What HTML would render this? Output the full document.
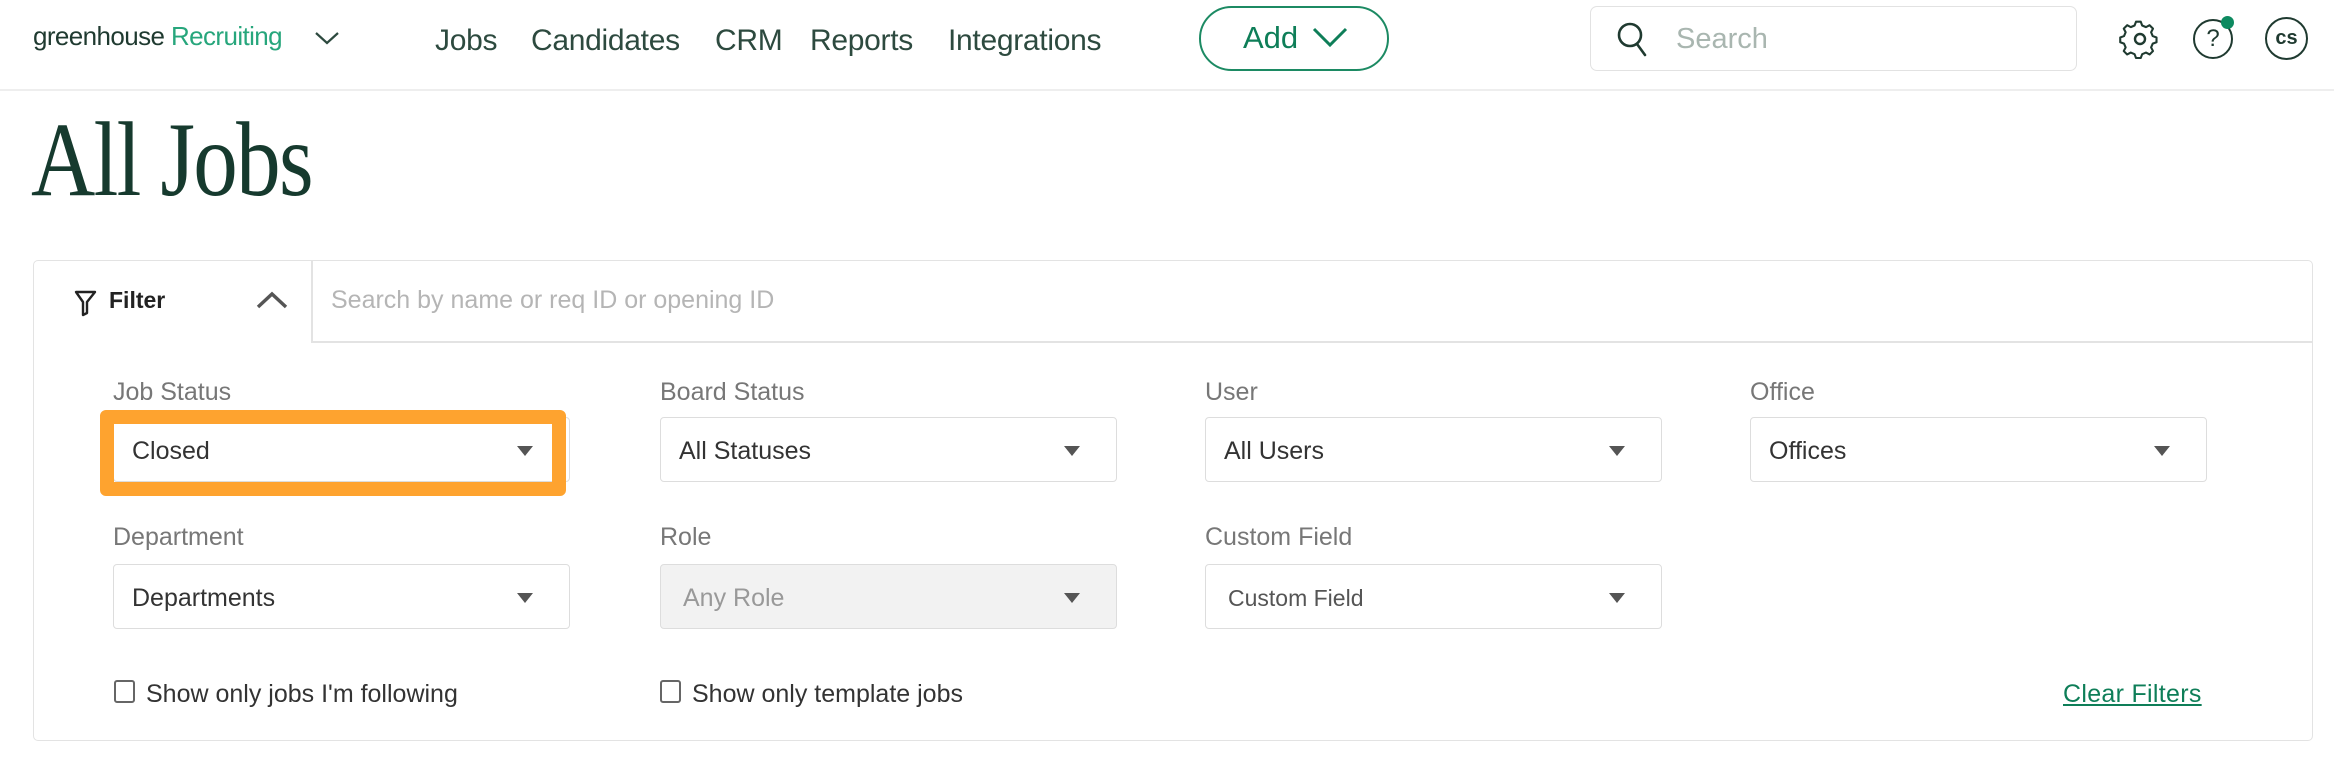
<!DOCTYPE html>
<html><head><meta charset="utf-8"><style>
*{margin:0;padding:0;box-sizing:border-box}
body{width:2334px;height:770px;background:#fff;font-family:"Liberation Sans",sans-serif;position:relative;overflow:hidden}
.a{position:absolute;white-space:nowrap}
.nav{top:24px;font-size:30px;color:#2d4a3f;letter-spacing:-0.3px}
.lbl{font-size:25px;color:#777}
.sel{position:absolute;width:457px;height:65px;border:1.5px solid #ddd;border-radius:4px;background:#fff;font-size:25px;color:#333;padding-left:18px;line-height:66px}
.sel:after{content:"";position:absolute;right:36px;top:28px;border-left:8px solid transparent;border-right:8px solid transparent;border-top:10px solid #555}
.cb{position:absolute;width:21px;height:23px;border:2px solid #666;border-radius:3px}
.ct{font-size:25px;color:#333}
</style></head><body>
<div class="a" style="left:33px;top:21px;font-size:26px;letter-spacing:-0.6px"><span style="color:#1f3a30">greenhouse</span> <span style="color:#27a67c">Recruiting</span></div>
<svg class="a" style="left:314px;top:30px" width="26" height="16"><path d="M2 3 L13 13 L24 3" fill="none" stroke="#2d4a3f" stroke-width="2.2"/></svg>
<div class="a nav" style="left:435px">Jobs</div>
<div class="a nav" style="left:531px">Candidates</div>
<div class="a nav" style="left:715px">CRM</div>
<div class="a nav" style="left:810px">Reports</div>
<div class="a nav" style="left:948px">Integrations</div>
<div class="a" style="left:1199px;top:6px;width:190px;height:65px;border:2px solid #1c8a63;border-radius:33px"></div>
<div class="a" style="left:1243px;top:20px;font-size:31px;color:#0e7e58">Add</div>
<svg class="a" style="left:1312px;top:26px" width="36" height="22"><path d="M2 3 L18 19 L34 3" fill="none" stroke="#0e7e58" stroke-width="3"/></svg>
<div class="a" style="left:1590px;top:6px;width:487px;height:65px;border:1.5px solid #e2e2e2;border-radius:7px"></div>
<svg class="a" style="left:1612px;top:19px" width="40" height="40"><circle cx="18" cy="16" r="11" fill="none" stroke="#1f3a30" stroke-width="2.6"/><path d="M25 25 L33 36" stroke="#1f3a30" stroke-width="2.6" stroke-linecap="round"/></svg>
<div class="a" style="left:1676px;top:23px;font-size:29px;color:#a9b6b0">Search</div>
<svg class="a" style="left:2119px;top:18px" width="44" height="44"><path d="M22 6 l3 0 l1.5 4 l4 1.7 l3.8-2 l3.6 3.6 l-2 3.8 l1.7 4 l4 1.5 v5 l-4 1.5 l-1.7 4 l2 3.8 l-3.6 3.6 l-3.8-2 l-4 1.7 l-1.5 4 h-5 l-1.5-4 l-4-1.7 l-3.8 2 l-3.6-3.6 l2-3.8 l-1.7-4 l-4-1.5 v-5 l4-1.5 l1.7-4 l-2-3.8 l3.6-3.6 l3.8 2 l4-1.7 l1.5-4 z" fill="none" stroke="#1f3a30" stroke-width="2.2" stroke-linejoin="round" transform="translate(-2,-2) scale(0.95)"/><circle cx="21" cy="21" r="5" fill="none" stroke="#1f3a30" stroke-width="2.4"/></svg>
<div class="a" style="left:2193px;top:19px;width:40px;height:40px;border:2.5px solid #1f3a30;border-radius:50%;text-align:center;font-size:24px;line-height:35px;color:#1f3a30">?</div>
<div class="a" style="left:2221px;top:16px;width:13px;height:13px;border-radius:50%;background:#0d8a60"></div>
<div class="a" style="left:2265px;top:17px;width:43px;height:43px;border:2.5px solid #1f3a30;border-radius:50%;text-align:center;font-size:20px;font-weight:bold;line-height:38px;color:#1f3a30">cs</div>
<div class="a" style="left:0;top:89px;width:2334px;height:2px;background:#eeeeee"></div>
<div class="a" style="left:31px;top:99px;font-family:'Liberation Serif',serif;font-size:106px;color:#163a2e;letter-spacing:-2px;transform:scaleX(0.84);transform-origin:left">All Jobs</div>

<div class="a" style="left:33px;top:260px;width:2280px;height:481px;border:1.5px solid #e3e3e3;border-radius:5px"></div>
<div class="a" style="left:311px;top:260px;width:1.5px;height:82px;background:#e3e3e3"></div>
<div class="a" style="left:311px;top:341px;width:2001px;height:1.5px;background:#e3e3e3"></div>
<svg class="a" style="left:73px;top:288px" width="26" height="30"><path d="M3 4 H22 L14 14 V25 L10 27 V14 Z" fill="none" stroke="#222" stroke-width="2.4" stroke-linejoin="round"/></svg>
<div class="a" style="left:109px;top:287px;font-size:23px;font-weight:bold;color:#222">Filter</div>
<svg class="a" style="left:255px;top:289px" width="34" height="22"><path d="M3 18 L17 5 L31 18" fill="none" stroke="#555" stroke-width="3.4"/></svg>
<div class="a" style="left:331px;top:286px;font-size:25px;color:#b5b5b5">Search by name or req ID or opening ID</div>

<div class="a lbl" style="left:113px;top:378px">Job Status</div>
<div class="a lbl" style="left:660px;top:378px">Board Status</div>
<div class="a lbl" style="left:1205px;top:378px">User</div>
<div class="a lbl" style="left:1750px;top:378px">Office</div>
<div class="sel" style="left:113px;top:417px">Closed</div>
<div class="a" style="left:100px;top:410px;width:466px;height:86px;border:14px solid #fea32f;border-radius:6px"></div>
<div class="sel" style="left:660px;top:417px">All Statuses</div>
<div class="sel" style="left:1205px;top:417px">All Users</div>
<div class="sel" style="left:1750px;top:417px">Offices</div>

<div class="a lbl" style="left:113px;top:523px">Department</div>
<div class="a lbl" style="left:660px;top:523px">Role</div>
<div class="a lbl" style="left:1205px;top:523px">Custom Field</div>
<div class="sel" style="left:113px;top:564px">Departments</div>
<div class="sel" style="left:660px;top:564px;background:#f2f2f2;color:#999;padding-left:22px">Any Role</div>
<div class="sel" style="left:1205px;top:564px;color:#555;padding-left:22px;font-size:23px">Custom Field</div>

<div class="cb" style="left:114px;top:680px"></div>
<div class="a ct" style="left:146px;top:680px">Show only jobs I'm following</div>
<div class="cb" style="left:660px;top:680px"></div>
<div class="a ct" style="left:692px;top:680px">Show only template jobs</div>
<div class="a" style="left:2063px;top:680px;font-size:25px;color:#0e7e58;text-decoration:underline;letter-spacing:0.3px">Clear Filters</div>
</body></html>
